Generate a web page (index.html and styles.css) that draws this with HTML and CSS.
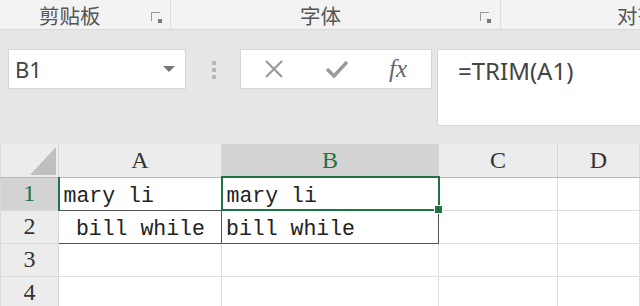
FILE: index.html
```html
<!DOCTYPE html>
<html lang="zh-CN">
<head>
    <meta charset="UTF-8">
    <title>TRIM</title>
    <link rel="stylesheet" href="styles.css">
</head>
<body>
    <div class="ribbon">
        <div class="group clip">
            <span class="label">剪贴板</span>
            <span class="launcher"></span>
        </div>
        <div class="group font">
            <span class="label">字体</span>
            <span class="launcher"></span>
        </div>
        <div class="group align">
            <span class="label">对齐</span>
        </div>
    </div>

    <div class="formula-bar">
        <div class="name-box">
            <span>B1</span>
            <span class="arrow"></span>
        </div>
        <div class="grip"><i></i><i></i><i></i></div>
        <div class="buttons">
            <svg width="22" height="22" viewBox="0 0 22 22"><path d="M3 3 L19 19 M19 3 L3 19" stroke="#9a9a9a" stroke-width="2.2" fill="none"/></svg>
            <svg width="24" height="22" viewBox="0 0 24 22"><path d="M2 11 L9 18 L22 4" stroke="#9a9a9a" stroke-width="3.4" fill="none"/></svg>
            <span class="fx">fx</span>
        </div>
        <div class="formula">=TRIM(A1)</div>
    </div>

    <table class="sheet">
        <colgroup>
            <col class="c-head"><col class="c-a"><col class="c-b"><col class="c-c"><col>
        </colgroup>
        <tr class="col-heads">
            <th class="corner"><span class="tri"></span></th>
            <th>A</th>
            <th class="active">B</th>
            <th>C</th>
            <th>D</th>
        </tr>
        <tr>
            <th class="row-head active">1</th>
            <td class="boxed">mary li</td>
            <td class="boxed selected">mary li<span class="handle"></span></td>
            <td></td>
            <td></td>
        </tr>
        <tr>
            <th class="row-head">2</th>
            <td class="boxed"> bill while</td>
            <td class="boxed">bill while</td>
            <td></td>
            <td></td>
        </tr>
        <tr>
            <th class="row-head">3</th>
            <td></td><td></td><td></td><td></td>
        </tr>
        <tr>
            <th class="row-head">4</th>
            <td></td><td></td><td></td><td></td>
        </tr>
    </table>
</body>
</html>
```

FILE: styles.css
```css
body {
    margin: 0;
    width: 640px;
    height: 306px;
    overflow: hidden;
    background: #e6e6e6;
    font-family: "Noto Sans", sans-serif;
}

/* ribbon group labels */
.ribbon {
    display: flex;
    height: 29px;
    background: #f3f3f3;
    border-bottom: 1px solid #d9d9d9;
}
.group {
    display: flex;
    align-items: center;
    border-right: 1px solid #dedede;
    white-space: nowrap;
    overflow: hidden;
}
.label {
    font-family: "Noto Sans CJK SC", sans-serif;
    font-size: 20.5px;
    color: #555;
}
.clip { width: 170px; }
.clip .label { margin-left: 39px; }
.clip .launcher { margin-left: 50px; }
.font { width: 329px; }
.font .label { margin-left: 129px; }
.font .launcher { margin-left: 139px; }
.align { flex: 1; border-right: none; }
.align .label { margin-left: 116px; }
.launcher {
    flex: none;
    width: 8px;
    height: 8px;
    border-left: 1px solid #999;
    border-top: 1px solid #999;
    margin-top: 4px;
    position: relative;
}
.launcher::after {
    content: "";
    position: absolute;
    right: -2px;
    bottom: -2px;
    width: 4px;
    height: 4px;
    background: #777;
}

/* formula bar */
.formula-bar {
    display: flex;
    align-items: flex-start;
    padding: 19px 0 0 8px;
    height: 96px;
}
.name-box {
    width: 178px;
    height: 40px;
    background: #fff;
    border: 1px solid #d6d6d6;
    display: flex;
    align-items: center;
    justify-content: space-between;
    padding: 0 10px 0 6px;
    box-sizing: border-box;
    font-size: 22px;
    color: #444;
}
.arrow {
    width: 0;
    height: 0;
    border-left: 6px solid transparent;
    border-right: 6px solid transparent;
    border-top: 6px solid #777;
}
.grip {
    display: flex;
    flex-direction: column;
    gap: 3px;
    margin: 12px 24px 0 26px;
}
.grip i {
    width: 4px;
    height: 4px;
    background: #b5b5b5;
    border-radius: 1px;
}
.buttons {
    width: 192px;
    height: 40px;
    background: #fff;
    border: 1px solid #d6d6d6;
    box-sizing: border-box;
    display: flex;
    align-items: center;
    padding: 0 22px;
    gap: 40px;
}
.fx {
    font-family: "Liberation Serif", serif;
    font-style: italic;
    font-size: 25px;
    color: #666;
}
.formula {
    flex: 1;
    margin-left: 5px;
    height: 77px;
    background: #fff;
    border: 1px solid #d6d6d6;
    border-right: none;
    box-sizing: border-box;
    padding: 4px 0 0 20px;
    font-size: 24px;
    color: #444;
}

/* grid */
.sheet {
    border-collapse: collapse;
    table-layout: fixed;
    width: 640px;
    background: #fff;
    margin-top: -1px;
}
.c-head { width: 58px; }
.c-a { width: 163px; }
.c-b { width: 217px; }
.c-c { width: 119px; }
.sheet tr { height: 33px; }
.sheet th {
    font-family: "Liberation Serif", serif;
    font-weight: normal;
    font-size: 24px;
    color: #333;
    background: #ececec;
    border: 1px solid #d8d8d8;
    padding: 0;
}
.col-heads th { border-top: none; border-bottom: 1px solid #b9b9b9; }
.col-heads th.active {
    background: #d3d3d3;
    color: #217346;
    border-bottom: 2px solid #217346;
}
.corner { position: relative; }
.tri {
    position: absolute;
    right: 2px;
    bottom: 2px;
    width: 0;
    height: 0;
    border-left: 26px solid transparent;
    border-bottom: 28px solid #bfbfbf;
}
.row-head { border-right: 1px solid #b9b9b9; }
.row-head.active {
    background: #d3d3d3;
    color: #217346;
    border-right: 2px solid #217346;
}
.sheet td {
    border: 1px solid #dedede;
    padding: 5px 0 0 4px;
    font-family: "Liberation Mono", monospace;
    font-size: 21.5px;
    line-height: 26px;
    color: #222;
    white-space: pre;
    overflow: visible;
}
.sheet td.boxed { border: 1px solid #555; }
.sheet td.selected {
    position: relative;
    border: 2px solid #217346;
}
.handle {
    position: absolute;
    right: -5px;
    bottom: -5px;
    width: 7px;
    height: 7px;
    background: #217346;
    border: 1px solid #fff;
}
```
